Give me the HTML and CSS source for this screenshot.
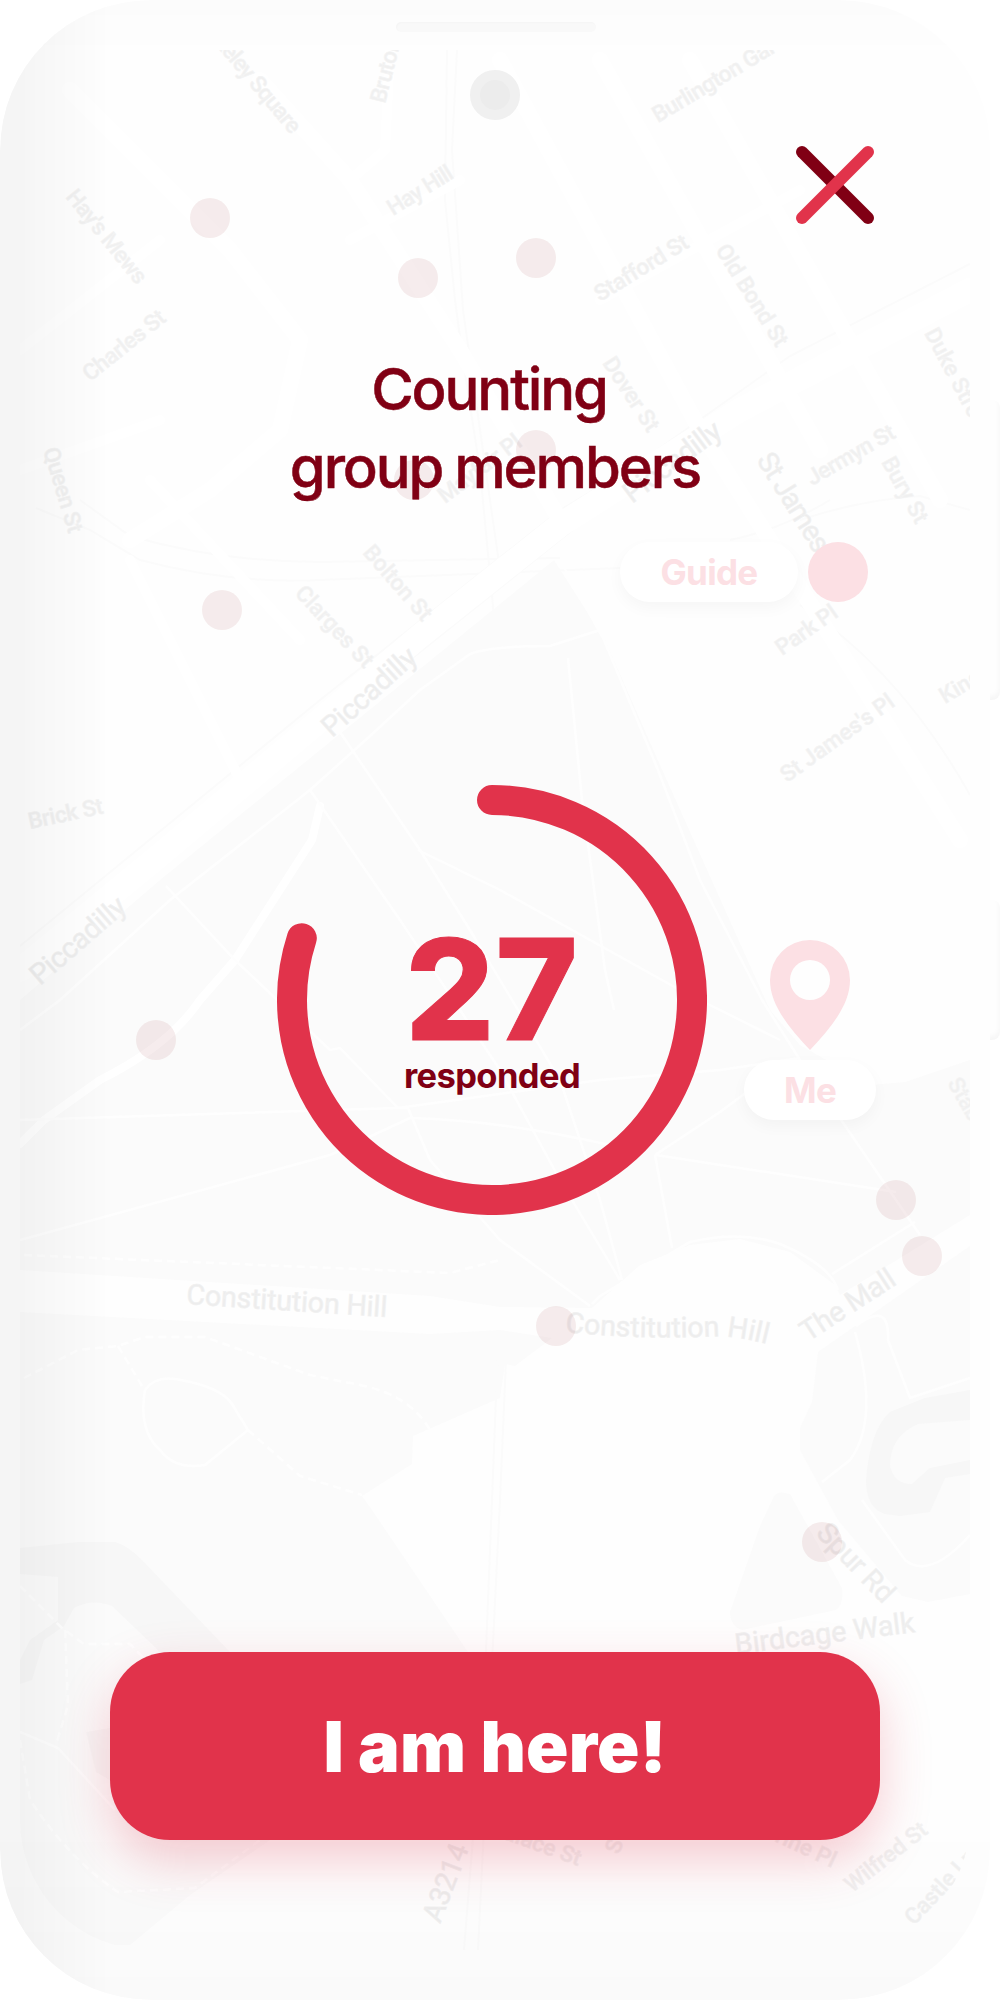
FILE: index.html
```html
<!DOCTYPE html>
<html lang="en">
<head>
<meta charset="utf-8">
<title>Counting group members</title>
<link rel="stylesheet" href="styles.css">
</head>
<body>
<div class="phone">
  <div class="side-key volume"></div>
  <div class="side-key power"></div>
  <div class="body">
    <div class="speaker"></div>
    <div class="screen">
      <svg class="map" width="950" height="1900" viewBox="20 50 950 1900" aria-hidden="true">
        <g class="park">
          <path d="M554 560L500 604L160 880L20 1000V1270L430 1296L500 1307L592 1308L640 1265L690 1245L740 1239L790 1252L835 1285L840 1295L970 1215V1060L905 1082L870 1085L800 1045L770 1010L660 765L605 640Z"/>
          <path d="M20 1312L430 1334L500 1330L552 1338L515 1366L505 1364L500 1398L413 1436L412 1464L362 1496L372 1510L470 1655V1720L270 1840L190 1895L130 1945L20 1945Z"/>
          <path d="M818 1352L970 1246V1594L928 1602L902 1596L838 1520L800 1450L800 1428L812 1402Z"/>
          <path d="M774 1496Q778 1490 790 1494L842 1588Q844 1604 836 1610L742 1630Q730 1626 730 1612L760 1526Z"/>
        </g>
        <g class="water">
          <path d="M20 1548L78 1542H115Q128 1546 142 1560L230 1652L260 1690L180 1700L158 1650L112 1606Q92 1598 74 1608L64 1626L44 1640L32 1680L20 1684V1660L30 1640L58 1620V1577L20 1574Z"/>
          <path d="M970 1390L925 1398L890 1412Q870 1430 866 1480Q866 1508 885 1514L900 1516L930 1512L945 1478L970 1474V1460L930 1468L912 1484Q894 1484 890 1466Q890 1436 918 1424L970 1420Z"/>
          <path d="M86 1732L110 1728V1780L96 1772Z"/>
        </g>
        <g class="rail">
          <path d="M447 50L445 200L455 300L463 360L480 470L500 680M457 50L452 150L463 310L490 500L500 570"/>
          <path d="M970 264L790 356L640 462L560 510L320 700L20 946M970 280L800 370L600 508L400 668L20 960"/>
          <path d="M36 508L90 530L140 560Q230 584 320 580L620 568M80 500L130 536Q220 562 320 562L560 558"/>
          <path d="M730 540Q780 530 830 500M970 510L920 496Q860 500 800 520M800 605Q900 670 970 795"/>
          <path d="M498 1345L492 1500L484 1700L464 1950M506 1360L500 1500L478 1950"/>
        </g>
        <g class="road">
          <path class="w24" d="M20 970L160 855L420 636L560 525L740 410L970 290"/>
          <path class="w16" d="M70 90L230 250L300 340L280 430L210 490L130 540M260 80L350 180L460 350L560 520M500 60L700 430L960 840M600 60L820 450M690 60L940 500"/>
          <path class="w10" d="M20 350L160 240M150 480L300 640M390 50L385 150L350 180M130 560L240 780M460 180L350 240M600 300L800 190M20 470L160 420"/>
          <path class="w6" d="M320 806L312 840L235 960L200 1000Q170 1045 100 1080L44 1120L20 1144"/>
        </g>
        <g class="path">
          <path d="M20 1030L60 1000L170 900L310 790L370 736L420 690L470 654Q490 646 550 646L600 630M568 658L582 800L605 970L614 1010M560 560L604 640L658 770L700 880L762 1000L800 1060L920 1235"/>
          <path d="M340 732L420 850L470 930L560 1080L600 1200L622 1280M310 790L400 920L500 1070L560 1180L620 1280M418 850L500 890L680 990L780 1040"/>
          <path d="M166 886L235 960L330 1050L340 1048L398 1108L408 1108L430 1160L500 1240L590 1306M20 1120L398 1108L600 1080L720 1070L800 1058M20 1240L330 1155L410 1118Q500 1120 610 1145M656 1155L896 1192M655 1155L672 1248M655 1155L720 1112L790 1060"/>
          <path d="M592 1304L600 1296L690 1242Q740 1230 780 1244Q830 1265 838 1290M832 1274L915 1222M855 1332Q880 1420 850 1460L822 1482M856 1326Q890 1300 888 1340L910 1398L970 1378M862 1500L905 1560Q930 1580 970 1535"/>
          <path d="M145 1390Q155 1376 175 1379Q220 1386 232 1404L248 1430L205 1465Q175 1470 160 1450Q138 1430 145 1390M20 1732L58 1748L115 1810"/>
          <path class="dash" d="M24 1255L450 1273L500 1260M24 1378L78 1350L118 1346L145 1337H205L310 1375L360 1385Q410 1395 430 1430M118 1346L142 1386M248 1430L300 1476L362 1495M20 1586L62 1628L84 1644H130L165 1680M65 1630L68 1705L56 1745M20 1740L30 1800Q70 1860 118 1892L195 1888L260 1840"/>
        </g>
        <g class="street">
          <text transform="translate(291 135) rotate(50)" text-anchor="end" textLength="152">Berkeley Square</text>
          <text transform="translate(385 104) rotate(-76)" textLength="65">Bruton</text>
          <text transform="translate(393 216) rotate(-32)" textLength="73">Hay Hill</text>
          <text transform="translate(65 197) rotate(51)" textLength="114">Hay's Mews</text>
          <text transform="translate(90 382) rotate(-38.5)" textLength="99">Charles St</text>
          <text transform="translate(43 450) rotate(73)" textLength="88">Queen St</text>
          <text transform="translate(445 504) rotate(-37)" textLength="98">Mayfair Pl</text>
          <text transform="translate(658 123) rotate(-31)" textLength="187">Burlington Gardens</text>
          <text transform="translate(600 302) rotate(-31.5)" textLength="106">Stafford St</text>
          <text transform="translate(715 250) rotate(58)" textLength="116">Old Bond St</text>
          <text transform="translate(602 363) rotate(57)" textLength="84">Dover St</text>
          <text transform="translate(924 333) rotate(62)">Duke Street</text>
          <text transform="translate(812 486) rotate(-30)" textLength="98">Jermyn St</text>
          <text transform="translate(881 462) rotate(61)" textLength="72">Bury St</text>
          <text transform="translate(782 656) rotate(-35)" textLength="70">Park Pl</text>
          <text transform="translate(945 704) rotate(-31)">King St</text>
          <text transform="translate(787 783) rotate(-35.5)" textLength="134">St James's Pl</text>
          <text transform="translate(362 553) rotate(49)" textLength="92">Bolton St</text>
          <text transform="translate(294 594) rotate(47)" textLength="103">Clarges St</text>
          <text transform="translate(30 829) rotate(-12)" textLength="76">Brick St</text>
          <text transform="translate(947 1083) rotate(60)">Stable Yd</text>
          <text transform="translate(578 1866) rotate(20)" text-anchor="end">Palace St</text>
          <text transform="translate(619 1855) rotate(-70)">Stafford Pl</text>
          <text transform="translate(832 1868) rotate(25)" text-anchor="end">Catherine Pl</text>
          <text transform="translate(852 1893) rotate(-38)" textLength="98">Wilfred St</text>
          <text transform="translate(914 1926) rotate(-47)">Castle Ln</text>
        </g>
        <g class="street major">
          <text transform="translate(632 504) rotate(-37)" textLength="115">Piccadilly</text>
          <text transform="translate(332 738) rotate(-42)" textLength="117">Piccadilly</text>
          <text transform="translate(40 986) rotate(-41)" textLength="117">Piccadilly</text>
          <text transform="translate(756 460) rotate(58)" textLength="128">St James's</text>
          <text transform="translate(186 1304) rotate(3.7)" textLength="201">Constitution Hill</text>
          <path id="hill-curve" class="guide-line" d="M565 1332Q640 1340 720 1336Q745 1337 790 1350"/>
          <text><textPath href="#hill-curve">Constitution Hill</textPath></text>
          <text transform="translate(808 1342) rotate(-33)" textLength="107">The Mall</text>
          <text transform="translate(815 1534) rotate(46)" textLength="98">Spur Rd</text>
          <text transform="translate(736 1654) rotate(-7)" textLength="181">Birdcage Walk</text>
          <text transform="translate(440 1924) rotate(-69)" textLength="81">A3214</text>
        </g>
        <g class="member">
          <circle cx="210" cy="218" r="20"/><circle cx="418" cy="278" r="20"/>
          <circle cx="536" cy="258" r="20"/><circle cx="536" cy="450" r="20"/>
          <circle cx="414" cy="480" r="20"/><circle cx="222" cy="610" r="20"/>
          <circle cx="156" cy="1040" r="20"/><circle cx="896" cy="1200" r="20"/>
          <circle cx="922" cy="1256" r="20"/><circle cx="556" cy="1326" r="20"/>
          <circle cx="822" cy="1542" r="20"/>
        </g>
        <circle class="pin" cx="838" cy="572" r="30"/>
        <path class="pin" fill-rule="evenodd" d="M810 940a40 40 0 0 1 40 40C850 1004 832 1027 810 1050C788 1027 770 1004 770 980a40 40 0 0 1 40-40ZM810 960a20 20 0 1 0 0 40a20 20 0 1 0 0-40Z"/>
      </svg>
      <span class="tag tag-guide">Guide</span>
      <span class="tag tag-me">Me</span>
    </div>
    <div class="camera"></div>
    <div class="shade"></div>
    <main class="content">
      <button class="close" aria-label="Close">
        <svg width="80" height="80" viewBox="0 0 80 80">
          <path class="stroke-dark" d="M7 7L73 73"/>
          <path class="stroke-red" d="M73 7L7 73"/>
        </svg>
      </button>
      <h1 class="title">Counting&nbsp;<br>group members</h1>
      <div class="progress">
        <svg class="ring" width="430" height="430" viewBox="-215 -215 430 430">
          <path d="M0 -200A200 200 0 1 1 -190.2 -61.8"/>
        </svg>
        <div class="count">27</div>
        <div class="caption">responded</div>
      </div>
      <button class="here">I am here!</button>
    </main>
  </div>
</div>
</body>
</html>
```
FILE: styles.css
```css
* { box-sizing: border-box; }
body { margin: 0; background: #fff; font-family: Inter, "Liberation Sans", sans-serif; }
.phone { position: relative; width: 1000px; height: 2000px; overflow: hidden; }
.side-key { position: absolute; right: 0; width: 20px; border-radius: 0 8px 8px 0; background: #fefefe; box-shadow: inset -1px -4px 5px rgba(0, 0, 0, .03); }
.volume { top: 400px; height: 300px; }
.power { top: 900px; height: 140px; }
.body { position: relative; width: 990px; height: 2000px; border-radius: 150px; overflow: hidden; background: #fefefe; }
.speaker { position: absolute; left: 396px; top: 22px; width: 200px; height: 10px; border-radius: 5px; background: #fafafa; box-shadow: inset 1px 1px 2px rgba(0, 0, 0, .02); }
.screen { position: absolute; left: 20px; top: 50px; width: 950px; height: 1900px; border-radius: 0 0 130px 130px; overflow: hidden; background: #fefefe; }
.map { display: block; }
.park { fill: #fbfbfb; }
.water { fill: #f7f7f7; }
.rail { fill: none; stroke: #fbfbfb; stroke-width: 2; }
.road { fill: none; stroke: #fff; stroke-linejoin: round; stroke-linecap: round; }
.w24 { stroke-width: 24; }
.w16 { stroke-width: 16; }
.w10 { stroke-width: 10; }
.w6 { stroke-width: 8; }
.path { fill: none; stroke: #fefefe; stroke-width: 2.5; }
.dash { stroke-dasharray: 8 5; }
.street { font: 500 22.5px Roboto, sans-serif; fill: #f0f0f0; stroke: #f4f4f4; stroke-width: .7; }
.major { font-size: 28.5px; font-weight: 400; fill: #ededed; stroke: #f1f1f1; }
.guide-line { fill: none; stroke: none; }
.member { fill: rgba(128, 0, 20, .075); }
.pin { fill: #fce0e4; }
.tag { position: absolute; display: flex; align-items: center; justify-content: center; height: 60px; border-radius: 30px; background: #fff; color: #fce0e4; font-size: 35px; font-weight: 700; letter-spacing: -.7px; box-shadow: 0 6px 16px rgba(0, 0, 0, .035); }
.tag-guide { left: 600px; top: 492px; width: 178px; }
.tag-me { left: 724px; top: 1010px; width: 132px; }
.camera { position: absolute; left: 470px; top: 70px; width: 50px; height: 50px; border: 10px solid #f0f0f0; border-radius: 50%; background: #ececec; }
.shade { position: absolute; inset: 0; border-radius: 150px; background: linear-gradient(90deg, rgba(0, 0, 0, .035) 20px, transparent 110px), linear-gradient(0deg, rgba(0, 0, 0, .016), transparent 180px), linear-gradient(180deg, rgba(0, 0, 0, .008), transparent 60px); }
.content { position: relative; display: flex; flex-direction: column; align-items: center; height: 2000px; padding: 145px 110px 0; }
.close { align-self: flex-end; width: 80px; height: 80px; margin-right: 5px; padding: 0; border: 0; background: none; }
.close svg { display: block; fill: none; stroke-width: 12; stroke-linecap: round; }
.stroke-dark { stroke: #800014; }
.stroke-red { stroke: #e1334b; }
.title { margin: 125px 0 0; color: #800014; font-size: 58px; line-height: 78px; font-weight: 500; letter-spacing: -2.1px; word-spacing: -1.5px; text-align: center; -webkit-text-stroke: .5px #800014; }
.progress { display: grid; justify-items: center; align-content: start; width: 430px; height: 430px; margin: 279px 6px 0 0; padding-top: 134px; }
.ring { position: absolute; margin-top: -134px; fill: none; stroke: #e1334b; stroke-width: 30; stroke-linecap: round; }
.count { color: #e1334b; font-size: 140px; line-height: 140px; font-weight: 800; letter-spacing: 1px; -webkit-text-stroke: 1px #e1334b; }
.caption { margin-top: -1px; color: #800014; font-size: 34.5px; line-height: 36px; font-weight: 700; letter-spacing: -.6px; }
.here { width: 770px; height: 188px; margin-top: 437px; padding: 0; border: 0; border-radius: 60px; background: #e1334b; color: #fff; font: 900 70px Inter, sans-serif; letter-spacing: .2px; box-shadow: 0 20px 50px rgba(225, 51, 75, .25); }
```
